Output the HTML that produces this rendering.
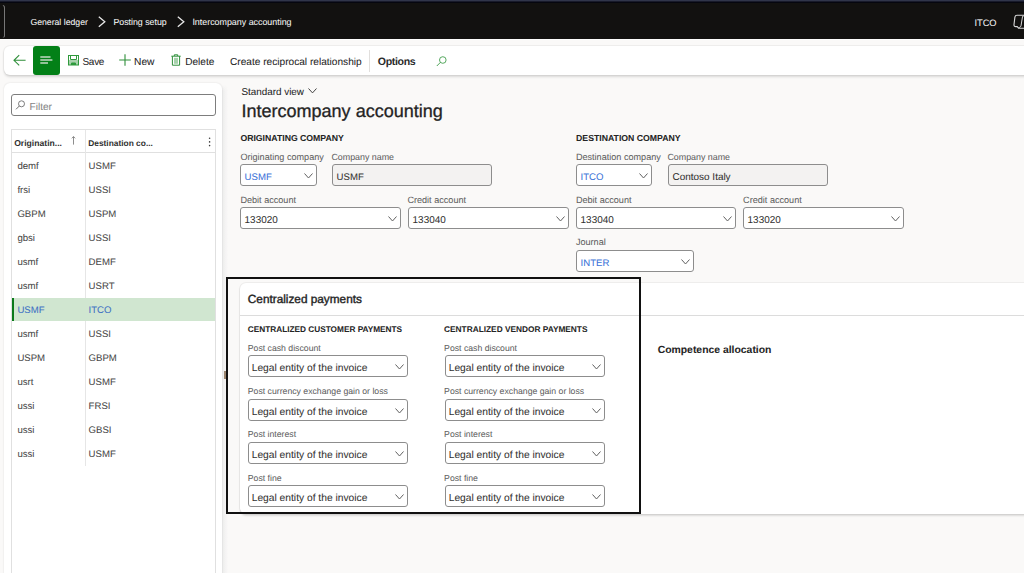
<!DOCTYPE html>
<html><head><meta charset="utf-8">
<style>
*{box-sizing:border-box;margin:0;padding:0}
html,body{width:1024px;height:573px;overflow:hidden}
body{position:relative;background:#faf9f8;font-family:"Liberation Sans",sans-serif;color:#242424}
.t{position:absolute;white-space:nowrap;line-height:1;-webkit-text-stroke:0.05px currentColor;text-rendering:geometricPrecision}
.r{position:absolute}
</style></head><body>
<div class="r" style="left:0px;top:0px;width:1024px;height:1px;background:#30354a"></div>
<div class="r" style="left:0px;top:1px;width:1024px;height:1px;background:#181a2a"></div>
<div class="r" style="left:0px;top:2px;width:1024px;height:1px;background:#05060f"></div>
<div class="r" style="left:0px;top:3px;width:1024px;height:36px;background:#121110"></div>
<div class="r" style="left:-1.5px;top:4.5px;width:6.5px;height:33px;border:1.2px solid #777;border-left:none;border-radius:0 2.5px 2.5px 0;clip-path:inset(0 0 0 4.4px)"></div>
<div class="t" style="left:30.40px;top:18px;font-size:8.7px;color:#f5f5f5;font-weight:normal;">General ledger</div>
<svg class="r" style="left:97.5px;top:16px" width="8" height="12" viewBox="0 0 8 12"><path d="M0.8 0.8 L6.8 5.75 L0.8 10.7" stroke="#e8e8e8" stroke-width="1.3" fill="none"/></svg>
<div class="t" style="left:113.40px;top:18px;font-size:8.8px;color:#f5f5f5;font-weight:normal;">Posting setup</div>
<svg class="r" style="left:176.5px;top:16px" width="8" height="12" viewBox="0 0 8 12"><path d="M0.8 0.8 L6.8 5.75 L0.8 10.7" stroke="#e8e8e8" stroke-width="1.3" fill="none"/></svg>
<div class="t" style="left:192.40px;top:18px;font-size:8.9px;color:#f5f5f5;font-weight:normal;">Intercompany accounting</div>
<div class="t" style="left:974.40px;top:19px;font-size:9.3px;color:#f0f0f0;font-weight:normal;">ITCO</div>
<svg class="r" style="left:1012px;top:14px" width="14" height="16" viewBox="0 0 14 16"><path d="M14 1.3 H5 Q3.2 1.3 2.9 3.2 L2 10.5 Q1.8 12.6 3.8 12.6 H5.2 L6.6 14.2 H14" stroke="#d8d8d8" stroke-width="1.1" fill="none"/><path d="M10.6 2.2 L9 11.8 Q8.8 13 7.6 13.2 L6.6 14.2" stroke="#d8d8d8" stroke-width="1" fill="none"/><path d="M11.2 2 H14" stroke="#d8d8d8" stroke-width="1" fill="none"/></svg>
<div class="r" style="left:0px;top:39px;width:1024px;height:1px;background:#fefefe"></div>
<div class="r" style="left:4px;top:46px;width:1036px;height:29px;background:#fff;border-radius:6px;box-shadow:0 0 0 1px rgba(0,0,0,.035),0 1.5px 2.5px rgba(0,0,0,.13)"></div>
<svg class="r" style="left:13px;top:54px" width="14" height="13" viewBox="0 0 14 13"><path d="M1 6.3 H12.6 M6.2 1.2 L1 6.3 L6.2 11.4" stroke="#2f8f3a" stroke-width="1.1" fill="none"/></svg>
<div class="r" style="left:33px;top:46px;width:27px;height:29px;background:#038017;border-radius:3px"></div>
<svg class="r" style="left:40px;top:55px" width="13" height="9" viewBox="0 0 13 9"><path d="M0.3 2 H10.5 M0.3 5 H12.4 M0.3 8 H8" stroke="#c4d8c4" stroke-width="1.3" fill="none"/></svg>
<svg class="r" style="left:67px;top:54px" width="13" height="12" viewBox="0 0 13 12"><rect x="2" y="6" width="9" height="5" fill="#a9d2ad"/><path d="M3.5 1.5 V5.5 H9.5 V1.5" stroke="#2f9a3c" stroke-width="1" fill="#fff"/><rect x="1.5" y="1.5" width="10" height="9.5" stroke="#2f9a3c" stroke-width="1" fill="none"/><path d="M4.5 11 V9 H8.5 V11" stroke="#2f9a3c" stroke-width="1" fill="#2f9a3c"/></svg>
<div class="t" style="left:82.50px;top:58px;font-size:10px;color:#242424;font-weight:normal;letter-spacing:-0.3px">Save</div>
<svg class="r" style="left:119px;top:54px" width="12" height="12" viewBox="0 0 12 12"><path d="M6 0.2 V11.8 M0.2 6 H11.8" stroke="#2f8f3a" stroke-width="1.1" fill="none"/></svg>
<div class="t" style="left:134.10px;top:58px;font-size:10.2px;color:#242424;font-weight:normal;">New</div>
<svg class="r" style="left:171px;top:54px" width="10" height="12" viewBox="0 0 10 12"><path d="M0.3 2.2 H9.7 M3.3 2 V0.8 H6.7 V2 M1.4 2.2 V11.2 H8.6 V2.2" stroke="#2f8f3a" stroke-width="1" fill="none"/><path d="M4 3.8 V9.8 M6 3.8 V9.8" stroke="#3a9a45" stroke-width="0.9"/></svg>
<div class="t" style="left:185.20px;top:58px;font-size:10.1px;color:#242424;font-weight:normal;">Delete</div>
<div class="t" style="left:230.00px;top:58px;font-size:10.14px;color:#242424;font-weight:normal;">Create reciprocal relationship</div>
<div class="r" style="left:369px;top:49.5px;width:1px;height:22.5px;background:#e1dfdd"></div>
<div class="t" style="left:377.80px;top:57px;font-size:10.6px;color:#2a2a2a;font-weight:bold;letter-spacing:-0.35px;-webkit-text-stroke:0">Options</div>
<svg class="r" style="left:436px;top:55.5px" width="11" height="11" viewBox="0 0 11 11"><circle cx="6.8" cy="4" r="3.3" stroke="#3a9a45" stroke-width="0.85" fill="none"/><path d="M4.4 6.4 L0.8 10" stroke="#3a9a45" stroke-width="0.9"/></svg>
<div class="r" style="left:222px;top:85px;width:6px;height:488px;background:linear-gradient(to right,#ececec,rgba(250,249,248,0));-webkit-mask-image:linear-gradient(to bottom,transparent,#000 6px)"></div>
<div class="r" style="left:4px;top:83px;width:218px;height:517px;background:#fff;border-radius:6px;box-shadow:0 0 2px rgba(0,0,0,.12)"></div>
<div class="r" style="left:11px;top:94px;width:204.5px;height:21.5px;background:#fff;border:1px solid #7d7d7d;border-radius:3px"></div>
<svg class="r" style="left:14.5px;top:100px" width="11" height="10" viewBox="0 0 11 10"><circle cx="6.5" cy="3.8" r="3" stroke="#6d6d6d" stroke-width="0.9" fill="none"/><path d="M4.3 6 L1 9.3" stroke="#6d6d6d" stroke-width="1"/></svg>
<div class="t" style="left:29.50px;top:103px;font-size:10.1px;color:#858585;font-weight:normal;">Filter</div>
<div class="r" style="left:11px;top:129px;width:205px;height:471px;border:1px solid #e0e0e0;border-bottom:none"></div>
<div class="r" style="left:12px;top:152px;width:203px;height:1px;background:#e0e0e0"></div>
<div class="r" style="left:85px;top:130px;width:1px;height:336px;background:#e6e6e6"></div>
<div class="t" style="left:14.20px;top:139px;font-size:8.6px;color:#303030;font-weight:bold;-webkit-text-stroke:0">Originatin...</div>
<svg class="r" style="left:71px;top:136px" width="5" height="9" viewBox="0 0 5 9"><path d="M2.5 8.6 V0.6 M0.8 2.3 L2.5 0.6 L4.2 2.3" stroke="#707070" stroke-width="0.8" fill="none"/></svg>
<div class="t" style="left:88.20px;top:139px;font-size:8.4px;color:#303030;font-weight:bold;-webkit-text-stroke:0">Destination co...</div>
<svg class="r" style="left:205px;top:134px" width="10" height="16" viewBox="0 0 10 16"><circle cx="4.6" cy="4.2" r="0.8" fill="#3a3a3a"/><circle cx="4.6" cy="7.9" r="0.8" fill="#3a3a3a"/><circle cx="4.6" cy="11.6" r="0.8" fill="#3a3a3a"/></svg>
<div class="r" style="left:12px;top:297.5px;width:203px;height:23.5px;background:#d0e6d0"></div>
<div class="r" style="left:11.5px;top:297.5px;width:2.5px;height:23.5px;background:#0b7a1a"></div>
<div class="t" style="left:17.40px;top:162px;font-size:9.6px;color:#474747;font-weight:normal;">demf</div>
<div class="t" style="left:88.60px;top:162px;font-size:9.6px;color:#474747;font-weight:normal;">USMF</div>
<div class="t" style="left:17.40px;top:186px;font-size:9.6px;color:#474747;font-weight:normal;">frsi</div>
<div class="t" style="left:88.60px;top:186px;font-size:9.6px;color:#474747;font-weight:normal;">USSI</div>
<div class="t" style="left:17.40px;top:210px;font-size:9.6px;color:#474747;font-weight:normal;">GBPM</div>
<div class="t" style="left:88.60px;top:210px;font-size:9.6px;color:#474747;font-weight:normal;">USPM</div>
<div class="t" style="left:17.40px;top:234px;font-size:9.6px;color:#474747;font-weight:normal;">gbsi</div>
<div class="t" style="left:88.60px;top:234px;font-size:9.6px;color:#474747;font-weight:normal;">USSI</div>
<div class="t" style="left:17.40px;top:258px;font-size:9.6px;color:#474747;font-weight:normal;">usmf</div>
<div class="t" style="left:88.60px;top:258px;font-size:9.6px;color:#474747;font-weight:normal;">DEMF</div>
<div class="t" style="left:17.40px;top:282px;font-size:9.6px;color:#474747;font-weight:normal;">usmf</div>
<div class="t" style="left:88.60px;top:282px;font-size:9.6px;color:#474747;font-weight:normal;">USRT</div>
<div class="t" style="left:17.40px;top:306px;font-size:9.6px;color:#3d6fc4;font-weight:normal;">USMF</div>
<div class="t" style="left:88.60px;top:306px;font-size:9.6px;color:#3d6fc4;font-weight:normal;">ITCO</div>
<div class="t" style="left:17.40px;top:330px;font-size:9.6px;color:#474747;font-weight:normal;">usmf</div>
<div class="t" style="left:88.60px;top:330px;font-size:9.6px;color:#474747;font-weight:normal;">USSI</div>
<div class="t" style="left:17.40px;top:354px;font-size:9.6px;color:#474747;font-weight:normal;">USPM</div>
<div class="t" style="left:88.60px;top:354px;font-size:9.6px;color:#474747;font-weight:normal;">GBPM</div>
<div class="t" style="left:17.40px;top:378px;font-size:9.6px;color:#474747;font-weight:normal;">usrt</div>
<div class="t" style="left:88.60px;top:378px;font-size:9.6px;color:#474747;font-weight:normal;">USMF</div>
<div class="t" style="left:17.40px;top:402px;font-size:9.6px;color:#474747;font-weight:normal;">ussi</div>
<div class="t" style="left:88.60px;top:402px;font-size:9.6px;color:#474747;font-weight:normal;">FRSI</div>
<div class="t" style="left:17.40px;top:426px;font-size:9.6px;color:#474747;font-weight:normal;">ussi</div>
<div class="t" style="left:88.60px;top:426px;font-size:9.6px;color:#474747;font-weight:normal;">GBSI</div>
<div class="t" style="left:17.40px;top:450px;font-size:9.6px;color:#474747;font-weight:normal;">ussi</div>
<div class="t" style="left:88.60px;top:450px;font-size:9.6px;color:#474747;font-weight:normal;">USMF</div>
<div class="t" style="left:241.40px;top:88px;font-size:9.9px;color:#242424;font-weight:normal;">Standard view</div>
<svg class="r" style="left:308px;top:87.8px" width="9" height="5.400000000000006" viewBox="0 0 9 5.400000000000006"><path d="M0.5 0.5 L4.5 4.900000000000006 L8.5 0.5" stroke="#3a3a3a" stroke-width="0.95" fill="none"/></svg>
<div class="t" style="left:241.40px;top:102px;font-size:18.05px;color:#242424;font-weight:normal;-webkit-text-stroke:0.3px currentColor">Intercompany accounting</div>
<div class="t" style="left:240.40px;top:134px;font-size:8.7px;color:#242424;font-weight:bold;">ORIGINATING COMPANY</div>
<div class="t" style="left:240.40px;top:153px;font-size:9.1px;color:#616161;font-weight:normal;">Originating company</div>
<div class="t" style="left:331.40px;top:153px;font-size:8.9px;color:#616161;font-weight:normal;">Company name</div>
<div class="r" style="left:240px;top:164px;width:77px;height:22px;background:#fff;border:1px solid #8d8d8d;border-radius:3px"></div>
<div class="t" style="left:244.60px;top:173px;font-size:9.6px;color:#3a72d8;font-weight:normal;">USMF</div>
<svg class="r" style="left:304px;top:172.5px" width="9" height="5.5" viewBox="0 0 9 5.5"><path d="M0.5 0.5 L4.5 5.0 L8.5 0.5" stroke="#616161" stroke-width="1" fill="none"/></svg>
<div class="r" style="left:332px;top:164px;width:160px;height:22px;background:#f3f2f1;border:1px solid #8d8d8d;border-radius:3px"></div>
<div class="t" style="left:336.60px;top:173px;font-size:9.6px;color:#323130;font-weight:normal;">USMF</div>
<div class="t" style="left:240.40px;top:196px;font-size:9.1px;color:#616161;font-weight:normal;">Debit account</div>
<div class="t" style="left:407.40px;top:196px;font-size:9.1px;color:#616161;font-weight:normal;">Credit account</div>
<div class="r" style="left:240px;top:207px;width:161px;height:22px;background:#fff;border:1px solid #8d8d8d;border-radius:3px"></div>
<div class="t" style="left:244.60px;top:216px;font-size:9.95px;color:#323130;font-weight:normal;">133020</div>
<svg class="r" style="left:388px;top:215.5px" width="9" height="5.5" viewBox="0 0 9 5.5"><path d="M0.5 0.5 L4.5 5.0 L8.5 0.5" stroke="#616161" stroke-width="1" fill="none"/></svg>
<div class="r" style="left:408px;top:207px;width:161px;height:22px;background:#fff;border:1px solid #8d8d8d;border-radius:3px"></div>
<div class="t" style="left:412.60px;top:216px;font-size:9.95px;color:#323130;font-weight:normal;">133040</div>
<svg class="r" style="left:556px;top:215.5px" width="9" height="5.5" viewBox="0 0 9 5.5"><path d="M0.5 0.5 L4.5 5.0 L8.5 0.5" stroke="#616161" stroke-width="1" fill="none"/></svg>
<div class="t" style="left:576.10px;top:134px;font-size:8.7px;color:#242424;font-weight:bold;">DESTINATION COMPANY</div>
<div class="t" style="left:575.90px;top:153px;font-size:9.1px;color:#616161;font-weight:normal;">Destination company</div>
<div class="t" style="left:667.40px;top:153px;font-size:8.9px;color:#616161;font-weight:normal;">Company name</div>
<div class="r" style="left:576px;top:164px;width:76px;height:22px;background:#fff;border:1px solid #8d8d8d;border-radius:3px"></div>
<div class="t" style="left:580.60px;top:173px;font-size:9.6px;color:#3a72d8;font-weight:normal;">ITCO</div>
<svg class="r" style="left:639px;top:172.5px" width="9" height="5.5" viewBox="0 0 9 5.5"><path d="M0.5 0.5 L4.5 5.0 L8.5 0.5" stroke="#616161" stroke-width="1" fill="none"/></svg>
<div class="r" style="left:668px;top:164px;width:160px;height:22px;background:#f3f2f1;border:1px solid #8d8d8d;border-radius:3px"></div>
<div class="t" style="left:672.60px;top:173px;font-size:9.95px;color:#323130;font-weight:normal;">Contoso Italy</div>
<div class="t" style="left:575.90px;top:196px;font-size:9.1px;color:#616161;font-weight:normal;">Debit account</div>
<div class="t" style="left:743.10px;top:196px;font-size:9.1px;color:#616161;font-weight:normal;">Credit account</div>
<div class="r" style="left:576px;top:207px;width:160px;height:22px;background:#fff;border:1px solid #8d8d8d;border-radius:3px"></div>
<div class="t" style="left:580.60px;top:216px;font-size:9.95px;color:#323130;font-weight:normal;">133040</div>
<svg class="r" style="left:723px;top:215.5px" width="9" height="5.5" viewBox="0 0 9 5.5"><path d="M0.5 0.5 L4.5 5.0 L8.5 0.5" stroke="#616161" stroke-width="1" fill="none"/></svg>
<div class="r" style="left:743px;top:207px;width:161px;height:22px;background:#fff;border:1px solid #8d8d8d;border-radius:3px"></div>
<div class="t" style="left:747.60px;top:216px;font-size:9.95px;color:#323130;font-weight:normal;">133020</div>
<svg class="r" style="left:891px;top:215.5px" width="9" height="5.5" viewBox="0 0 9 5.5"><path d="M0.5 0.5 L4.5 5.0 L8.5 0.5" stroke="#616161" stroke-width="1" fill="none"/></svg>
<div class="t" style="left:575.90px;top:238px;font-size:9.1px;color:#616161;font-weight:normal;">Journal</div>
<div class="r" style="left:576px;top:250px;width:118px;height:22px;background:#fff;border:1px solid #8d8d8d;border-radius:3px"></div>
<div class="t" style="left:580.60px;top:259px;font-size:9.6px;color:#3a72d8;font-weight:normal;">INTER</div>
<svg class="r" style="left:681px;top:258.5px" width="9" height="5.5" viewBox="0 0 9 5.5"><path d="M0.5 0.5 L4.5 5.0 L8.5 0.5" stroke="#616161" stroke-width="1" fill="none"/></svg>
<div class="r" style="left:240px;top:283px;width:800px;height:231px;background:#fff;border-radius:6px;box-shadow:0 0 0 1px rgba(0,0,0,.045),0 1.5px 2px rgba(0,0,0,.12)"></div>
<div class="r" style="left:240px;top:315px;width:784px;height:1px;background:#dcdcdc"></div>
<div class="t" style="left:247.80px;top:294px;font-size:11.8px;color:#242424;font-weight:normal;-webkit-text-stroke:0.4px currentColor">Centralized payments</div>
<div class="t" style="left:247.80px;top:326px;font-size:8.25px;color:#242424;font-weight:bold;">CENTRALIZED CUSTOMER PAYMENTS</div>
<div class="t" style="left:247.80px;top:344px;font-size:8.7px;color:#616161;font-weight:normal;">Post cash discount</div>
<div class="r" style="left:248px;top:355px;width:160px;height:22px;background:#fff;border:1px solid #8d8d8d;border-radius:3px"></div>
<div class="t" style="left:251.70px;top:364px;font-size:10.26px;color:#323130;font-weight:normal;">Legal entity of the invoice</div>
<svg class="r" style="left:395px;top:363.5px" width="9" height="5.5" viewBox="0 0 9 5.5"><path d="M0.5 0.5 L4.5 5.0 L8.5 0.5" stroke="#616161" stroke-width="1" fill="none"/></svg>
<div class="t" style="left:247.80px;top:387px;font-size:8.7px;color:#616161;font-weight:normal;">Post currency exchange gain or loss</div>
<div class="r" style="left:248px;top:399px;width:160px;height:22px;background:#fff;border:1px solid #8d8d8d;border-radius:3px"></div>
<div class="t" style="left:251.70px;top:408px;font-size:10.26px;color:#323130;font-weight:normal;">Legal entity of the invoice</div>
<svg class="r" style="left:395px;top:407.5px" width="9" height="5.5" viewBox="0 0 9 5.5"><path d="M0.5 0.5 L4.5 5.0 L8.5 0.5" stroke="#616161" stroke-width="1" fill="none"/></svg>
<div class="t" style="left:247.80px;top:430px;font-size:8.7px;color:#616161;font-weight:normal;">Post interest</div>
<div class="r" style="left:248px;top:442px;width:160px;height:22px;background:#fff;border:1px solid #8d8d8d;border-radius:3px"></div>
<div class="t" style="left:251.70px;top:451px;font-size:10.26px;color:#323130;font-weight:normal;">Legal entity of the invoice</div>
<svg class="r" style="left:395px;top:450.5px" width="9" height="5.5" viewBox="0 0 9 5.5"><path d="M0.5 0.5 L4.5 5.0 L8.5 0.5" stroke="#616161" stroke-width="1" fill="none"/></svg>
<div class="t" style="left:247.80px;top:474px;font-size:8.7px;color:#616161;font-weight:normal;">Post fine</div>
<div class="r" style="left:248px;top:485px;width:160px;height:22px;background:#fff;border:1px solid #8d8d8d;border-radius:3px"></div>
<div class="t" style="left:251.70px;top:494px;font-size:10.26px;color:#323130;font-weight:normal;">Legal entity of the invoice</div>
<svg class="r" style="left:395px;top:493.5px" width="9" height="5.5" viewBox="0 0 9 5.5"><path d="M0.5 0.5 L4.5 5.0 L8.5 0.5" stroke="#616161" stroke-width="1" fill="none"/></svg>
<div class="t" style="left:444.10px;top:325px;font-size:8.3px;color:#242424;font-weight:bold;">CENTRALIZED VENDOR PAYMENTS</div>
<div class="t" style="left:444.10px;top:344px;font-size:8.7px;color:#616161;font-weight:normal;">Post cash discount</div>
<div class="r" style="left:445px;top:355px;width:160px;height:22px;background:#fff;border:1px solid #8d8d8d;border-radius:3px"></div>
<div class="t" style="left:448.70px;top:364px;font-size:10.26px;color:#323130;font-weight:normal;">Legal entity of the invoice</div>
<svg class="r" style="left:592px;top:363.5px" width="9" height="5.5" viewBox="0 0 9 5.5"><path d="M0.5 0.5 L4.5 5.0 L8.5 0.5" stroke="#616161" stroke-width="1" fill="none"/></svg>
<div class="t" style="left:444.10px;top:387px;font-size:8.7px;color:#616161;font-weight:normal;">Post currency exchange gain or loss</div>
<div class="r" style="left:445px;top:399px;width:160px;height:22px;background:#fff;border:1px solid #8d8d8d;border-radius:3px"></div>
<div class="t" style="left:448.70px;top:408px;font-size:10.26px;color:#323130;font-weight:normal;">Legal entity of the invoice</div>
<svg class="r" style="left:592px;top:407.5px" width="9" height="5.5" viewBox="0 0 9 5.5"><path d="M0.5 0.5 L4.5 5.0 L8.5 0.5" stroke="#616161" stroke-width="1" fill="none"/></svg>
<div class="t" style="left:444.10px;top:430px;font-size:8.7px;color:#616161;font-weight:normal;">Post interest</div>
<div class="r" style="left:445px;top:442px;width:160px;height:22px;background:#fff;border:1px solid #8d8d8d;border-radius:3px"></div>
<div class="t" style="left:448.70px;top:451px;font-size:10.26px;color:#323130;font-weight:normal;">Legal entity of the invoice</div>
<svg class="r" style="left:592px;top:450.5px" width="9" height="5.5" viewBox="0 0 9 5.5"><path d="M0.5 0.5 L4.5 5.0 L8.5 0.5" stroke="#616161" stroke-width="1" fill="none"/></svg>
<div class="t" style="left:444.10px;top:474px;font-size:8.7px;color:#616161;font-weight:normal;">Post fine</div>
<div class="r" style="left:445px;top:485px;width:160px;height:22px;background:#fff;border:1px solid #8d8d8d;border-radius:3px"></div>
<div class="t" style="left:448.70px;top:494px;font-size:10.26px;color:#323130;font-weight:normal;">Legal entity of the invoice</div>
<svg class="r" style="left:592px;top:493.5px" width="9" height="5.5" viewBox="0 0 9 5.5"><path d="M0.5 0.5 L4.5 5.0 L8.5 0.5" stroke="#616161" stroke-width="1" fill="none"/></svg>
<div class="r" style="left:226px;top:277px;width:415px;height:237px;border:2px solid #111"></div>
<div class="r" style="left:224px;top:371px;width:2px;height:7.600000000000023px;background:#9c8670"></div>
<div class="t" style="left:657.70px;top:346px;font-size:10.4px;color:#242424;font-weight:bold;">Competence allocation</div>
</body></html>
